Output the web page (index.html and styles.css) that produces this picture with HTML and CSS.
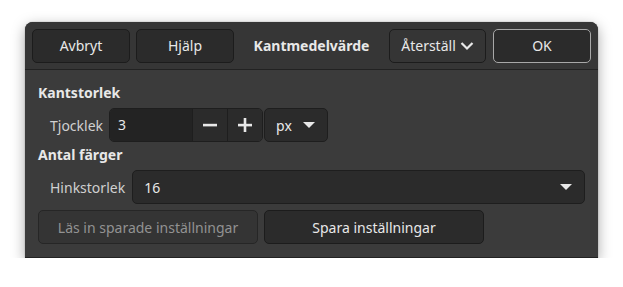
FILE: index.html
```html
<!DOCTYPE html>
<html>
<head>
    <title>Kantmedelvärde</title>
    <meta charset="UTF-8">
    <link rel="stylesheet" href="styles.css">
</head>
<body>
    <div class="dialog">
        <div class="headerbar">
            <button class="btn hb-btn">Avbryt</button>
            <button class="btn hb-btn">Hjälp</button>
            <div class="title">Kantmedelvärde</div>
            <button class="btn reset-btn">Återställ
                <svg width="14" height="10" viewBox="0 0 14 10"><path d="M1.5 2 L7 7.5 L12.5 2" fill="none" stroke="#e8e8e8" stroke-width="2.2"/></svg>
            </button>
            <button class="btn hb-btn ok-btn">OK</button>
        </div>

        <div class="content">
            <div class="section-title">Kantstorlek</div>
            <div class="row">
                <span class="label">Tjocklek</span>
                <div class="spin">
                    <div class="spin-entry">3</div>
                    <div class="spin-btn">
                        <svg width="14" height="14" viewBox="0 0 14 14"><rect x="0" y="5.8" width="14" height="2.6" fill="#e8e8e8"/></svg>
                    </div>
                    <div class="spin-btn">
                        <svg width="14" height="14" viewBox="0 0 14 14"><rect x="0" y="5.8" width="14" height="2.6" fill="#e8e8e8"/><rect x="5.7" y="0" width="2.6" height="14" fill="#e8e8e8"/></svg>
                    </div>
                </div>
                <div class="combo unit">
                    <span>px</span>
                    <span class="arrow"></span>
                </div>
            </div>

            <div class="section-title">Antal färger</div>
            <div class="row">
                <span class="label">Hinkstorlek</span>
                <div class="combo wide">
                    <span>16</span>
                    <span class="arrow"></span>
                </div>
            </div>

            <div class="row actions">
                <button class="btn action disabled">Läs in sparade inställningar</button>
                <button class="btn action">Spara inställningar</button>
            </div>
        </div>
    </div>
</body>
</html>
```

FILE: styles.css
```css
body {
    margin: 0;
    padding: 22px 0 0 25px;
    background: #ffffff;
    font-family: 'Noto Sans', sans-serif;
    font-size: 14px;
    color: #e8e8e8;
}

.dialog {
    width: 573px;
    height: 236px;
    background: #3b3b3b;
    border-radius: 8px 8px 0 0;
    box-shadow: 0 4px 14px rgba(0, 0, 0, 0.35), 0 0 1px rgba(0, 0, 0, 0.6);
    box-sizing: border-box;
    border-bottom: 1px solid #222;
}

.headerbar {
    display: flex;
    align-items: center;
    gap: 6px;
    height: 47px;
    padding: 0 7px;
    background: #363636;
    border-bottom: 1px solid #222;
    border-radius: 8px 8px 0 0;
}

.btn {
    font-family: inherit;
    font-size: 14px;
    color: #e8e8e8;
    background: #2b2b2b;
    border: 1px solid #1c1c1c;
    border-radius: 5px;
    height: 34px;
    box-sizing: border-box;
    padding: 0;
}

.hb-btn {
    width: 98px;
}

.ok-btn {
    border-color: #a8a8a8;
    margin-left: 1px;
}

.title {
    flex: 1;
    text-align: center;
    font-weight: bold;
}

.reset-btn {
    width: 97px;
    display: flex;
    align-items: center;
    justify-content: center;
    gap: 4px;
    background: #353535;
}

.content {
    padding: 10px 13px 0 13px;
}

.section-title {
    font-weight: bold;
    height: 24px;
    line-height: 24px;
    margin-top: 1px;
}

.row {
    display: flex;
    align-items: center;
    height: 34px;
    margin-top: 3px;
}

.label {
    padding-left: 12px;
    margin-right: 6px;
    color: #d0d0d0;
}

.spin {
    display: flex;
    height: 34px;
    border: 1px solid #1e1e1e;
    border-radius: 5px;
    box-sizing: border-box;
    overflow: hidden;
}

.spin-entry {
    width: 82px;
    background: #232323;
    line-height: 32px;
    padding-left: 8px;
    box-sizing: border-box;
}

.spin-btn {
    width: 34px;
    display: flex;
    align-items: center;
    justify-content: center;
    background: #2b2b2b;
    border-left: 1px solid #1e1e1e;
}

.combo {
    display: flex;
    align-items: center;
    justify-content: space-between;
    height: 34px;
    box-sizing: border-box;
    background: #2b2b2b;
    border: 1px solid #1e1e1e;
    border-radius: 5px;
    padding: 0 12px 0 11px;
}

.unit {
    width: 64px;
    margin-left: 1px;
}

.wide {
    flex: 1;
    margin-left: 1px;
}

.arrow {
    width: 0;
    height: 0;
    border-left: 6px solid transparent;
    border-right: 6px solid transparent;
    border-top: 6px solid #e8e8e8;
}

.actions {
    margin-top: 6px;
    gap: 6px;
}

.action {
    width: 220px;
}

.disabled {
    color: #929292;
    background: #343434;
    border-color: #262626;
}
```
